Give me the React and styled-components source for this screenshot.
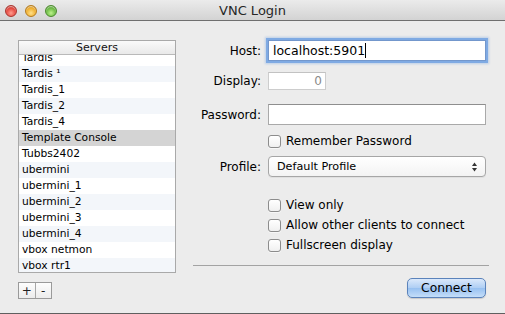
import { useLayoutEffect, useRef } from 'react';
import styled, { createGlobalStyle } from 'styled-components';

const GlobalStyle = createGlobalStyle`
  html, body {
    margin: 0;
    padding: 0;
    background: #ececec;
    font-family: "DejaVu Sans", "Noto Sans", sans-serif;
    color: #000;
  }
  * {
    box-sizing: border-box;
  }
`;

const Window = styled.div`
  width: 505px;
  height: 314px;
  background: #ececec;
  border-bottom: 1px solid #5f5f5f;
  display: flex;
  flex-direction: column;
  overflow: hidden;
`;

const TitleBar = styled.div`
  height: 21px;
  flex: none;
  display: grid;
  grid-template-columns: 1fr auto 1fr;
  align-items: center;
  background: linear-gradient(#ebebeb, #d3d3d3);
  border-bottom: 1px solid #6f6f6f;
`;

const Lights = styled.div`
  display: flex;
  gap: 8px;
  padding-left: 5px;
  padding-top: 1px;
`;

const Light = styled.span`
  width: 12px;
  height: 12px;
  border-radius: 50%;
  border: 1px solid ${(p) => p.edge};
  background: radial-gradient(circle at 50% 70%, ${(p) => p.glow} 0%, ${(p) => p.color} 55%, ${(p) => p.edge} 100%);
  box-shadow: inset 0 1px 1px rgba(255, 255, 255, 0.6);
`;

const Title = styled.div`
  font-size: 13px;
  color: #262626;
  padding-top: 1px;
`;

const Body = styled.div`
  display: flex;
  gap: 17px;
  padding: 19px 16px 0 18px;
`;

const LeftColumn = styled.div`
  width: 158px;
  display: flex;
  flex-direction: column;
`;

const List = styled.div`
  height: 233px;
  border: 1px solid #a9a9a9;
  background: #fff;
  display: flex;
  flex-direction: column;
`;

const ListHeader = styled.div`
  height: 14px;
  flex: none;
  border-bottom: 1px solid #b9b9b9;
  background: linear-gradient(#fafafa, #e9e9e9);
  font-size: 11px;
  line-height: 13px;
  text-align: center;
  color: #111;
`;

const Rows = styled.div`
  flex: 1;
  overflow: hidden;
`;

const Row = styled.div`
  height: 16px;
  line-height: 16px;
  padding-left: 3px;
  font-size: 10.7px;
  white-space: nowrap;
  background: ${(p) => (p.selected ? '#d4d4d4' : p.odd ? '#f3f6fa' : '#fff')};
`;

const ListButtons = styled.div`
  margin-top: 9px;
  display: flex;
  width: 34px;
  height: 17px;
  border: 1px solid #9a9a9a;
  background: linear-gradient(#fdfdfd, #ececec);
`;

const ListButton = styled.div`
  flex: 1;
  display: flex;
  align-items: center;
  justify-content: center;
  font-size: 12px;
  line-height: 1;
  color: #222;
  & + & {
    border-left: 1px solid #a7a7a7;
  }
`;

const RightColumn = styled.div`
  width: 296px;
  display: flex;
  flex-direction: column;
`;

const FormRow = styled.div`
  display: grid;
  grid-template-columns: 68px 218px;
  column-gap: 7px;
  align-items: center;
  height: ${(p) => p.h}px;
  margin-top: ${(p) => p.top || 0}px;
`;

const Label = styled.div`
  text-align: right;
  font-size: 12px;
  white-space: nowrap;
`;

const TextField = styled.div`
  height: ${(p) => (p.small ? 18 : 21)}px;
  width: ${(p) => (p.small ? '58px' : '100%')};
  background: #fff;
  border: 1px solid ${(p) => (p.focused ? '#7397cc' : p.small ? '#cdcdcd' : '#a9a9a9')};
  border-top-color: ${(p) => (p.focused ? '#7397cc' : p.small ? '#c2c2c2' : '#8e8e8e')};
  box-shadow: ${(p) => (p.focused ? '0 0 0 2px rgba(116, 163, 226, 0.85), 0 0 2px 3px rgba(116, 163, 226, 0.4)' : 'none')};
  padding: 0 ${(p) => (p.small ? '3px' : '4px')};
  font-size: ${(p) => (p.small ? '12px' : '12.5px')};
  line-height: ${(p) => (p.small ? 16 : 19)}px;
  text-align: ${(p) => (p.small ? 'right' : 'left')};
  color: ${(p) => (p.small ? '#8a8a8a' : '#000')};
  white-space: nowrap;
`;

const Caret = styled.span`
  display: inline-block;
  width: 1px;
  height: 15px;
  background: #000;
  vertical-align: -3px;
`;

const CheckLine = styled.label`
  grid-column: 2;
  display: flex;
  align-items: center;
  gap: 5px;
  font-size: 12px;
  white-space: nowrap;
`;

const Box = styled.span`
  width: 13px;
  height: 13px;
  flex: none;
  border: 1px solid #8c8c8c;
  border-radius: 3px;
  background: linear-gradient(#ffffff, #f0f0f0);
  box-shadow: 0 1px 0 rgba(255, 255, 255, 0.6);
`;

const Select = styled.div`
  height: 21px;
  border: 1px solid #a6a6a6;
  border-radius: 4px;
  background: linear-gradient(#ffffff, #f3f3f3);
  display: flex;
  align-items: center;
  justify-content: space-between;
  padding: 0 8px 0 8px;
  font-size: 11.2px;
  box-shadow: 0 1px 0 rgba(0, 0, 0, 0.05);
`;

const Separator = styled.div`
  margin-top: 14px;
  height: 1px;
  background: #a3a3a3;
`;

const ButtonRow = styled.div`
  margin-top: 12px;
  display: flex;
  justify-content: flex-end;
  padding-right: 3px;
`;

const ConnectButton = styled.div`
  width: 79px;
  height: 20px;
  border-radius: 5px;
  border: 1px solid #5b83bb;
  background: linear-gradient(#dbe9fb 0%, #b0cff4 48%, #98c1f1 52%, #c4def9 100%);
  display: flex;
  align-items: center;
  justify-content: center;
  font-size: 12.3px;
  color: #000;
  box-shadow: 0 1px 1px rgba(0, 0, 0, 0.15);
`;

const servers = [
  'Tardis',
  'Tardis \u00b9',
  'Tardis_1',
  'Tardis_2',
  'Tardis_4',
  'Template Console',
  'Tubbs2402',
  'ubermini',
  'ubermini_1',
  'ubermini_2',
  'ubermini_3',
  'ubermini_4',
  'vbox netmon',
  'vbox rtr1',
];

const options = ['View only', 'Allow other clients to connect', 'Fullscreen display'];

function Stepper() {
  return (
    <svg width="5" height="10" viewBox="0 0 5 10">
      <path d="M2.5 0.5 L5 4 H0 Z" fill="#333" />
      <path d="M2.5 9.5 L5 6 H0 Z" fill="#333" />
    </svg>
  );
}

function ServerList() {
  const rowsRef = useRef(null);

  useLayoutEffect(() => {
    if (rowsRef.current) rowsRef.current.scrollTop = 5;
  }, []);

  return (
    <List>
      <ListHeader>Servers</ListHeader>
      <Rows ref={rowsRef}>
        {servers.map((name, i) => (
          <Row key={name} odd={i % 2 === 1} selected={name === 'Template Console'}>
            {name}
          </Row>
        ))}
      </Rows>
    </List>
  );
}

export default function App() {
  return (
    <>
      <GlobalStyle />
      <Window>
        <TitleBar>
          <Lights>
            <Light color="#e5483f" glow="#ff9c8e" edge="#a9342d" />
            <Light color="#f0b030" glow="#ffe08a" edge="#b57b1c" />
            <Light color="#6dbb45" glow="#bdf28c" edge="#4a8a2c" />
          </Lights>
          <Title>VNC Login</Title>
          <div />
        </TitleBar>
        <Body>
          <LeftColumn>
            <ServerList />
            <ListButtons>
              <ListButton>+</ListButton>
              <ListButton>-</ListButton>
            </ListButtons>
          </LeftColumn>
          <RightColumn>
            <FormRow h={21}>
              <Label>Host:</Label>
              <TextField focused>
                localhost:5901<Caret />
              </TextField>
            </FormRow>
            <FormRow h={18} top={11}>
              <Label>Display:</Label>
              <TextField small>0</TextField>
            </FormRow>
            <FormRow h={21} top={14}>
              <Label>Password:</Label>
              <TextField />
            </FormRow>
            <FormRow h={13} top={9}>
              <CheckLine>
                <Box />
                Remember Password
              </CheckLine>
            </FormRow>
            <FormRow h={21} top={9}>
              <Label>Profile:</Label>
              <Select>
                <span>Default Profile</span>
                <Stepper />
              </Select>
            </FormRow>
            {options.map((text, i) => (
              <FormRow key={text} h={13} top={i === 0 ? 21 : 7}>
                <CheckLine>
                  <Box />
                  {text}
                </CheckLine>
              </FormRow>
            ))}
            <Separator />
            <ButtonRow>
              <ConnectButton>Connect</ConnectButton>
            </ButtonRow>
          </RightColumn>
        </Body>
      </Window>
    </>
  );
}
